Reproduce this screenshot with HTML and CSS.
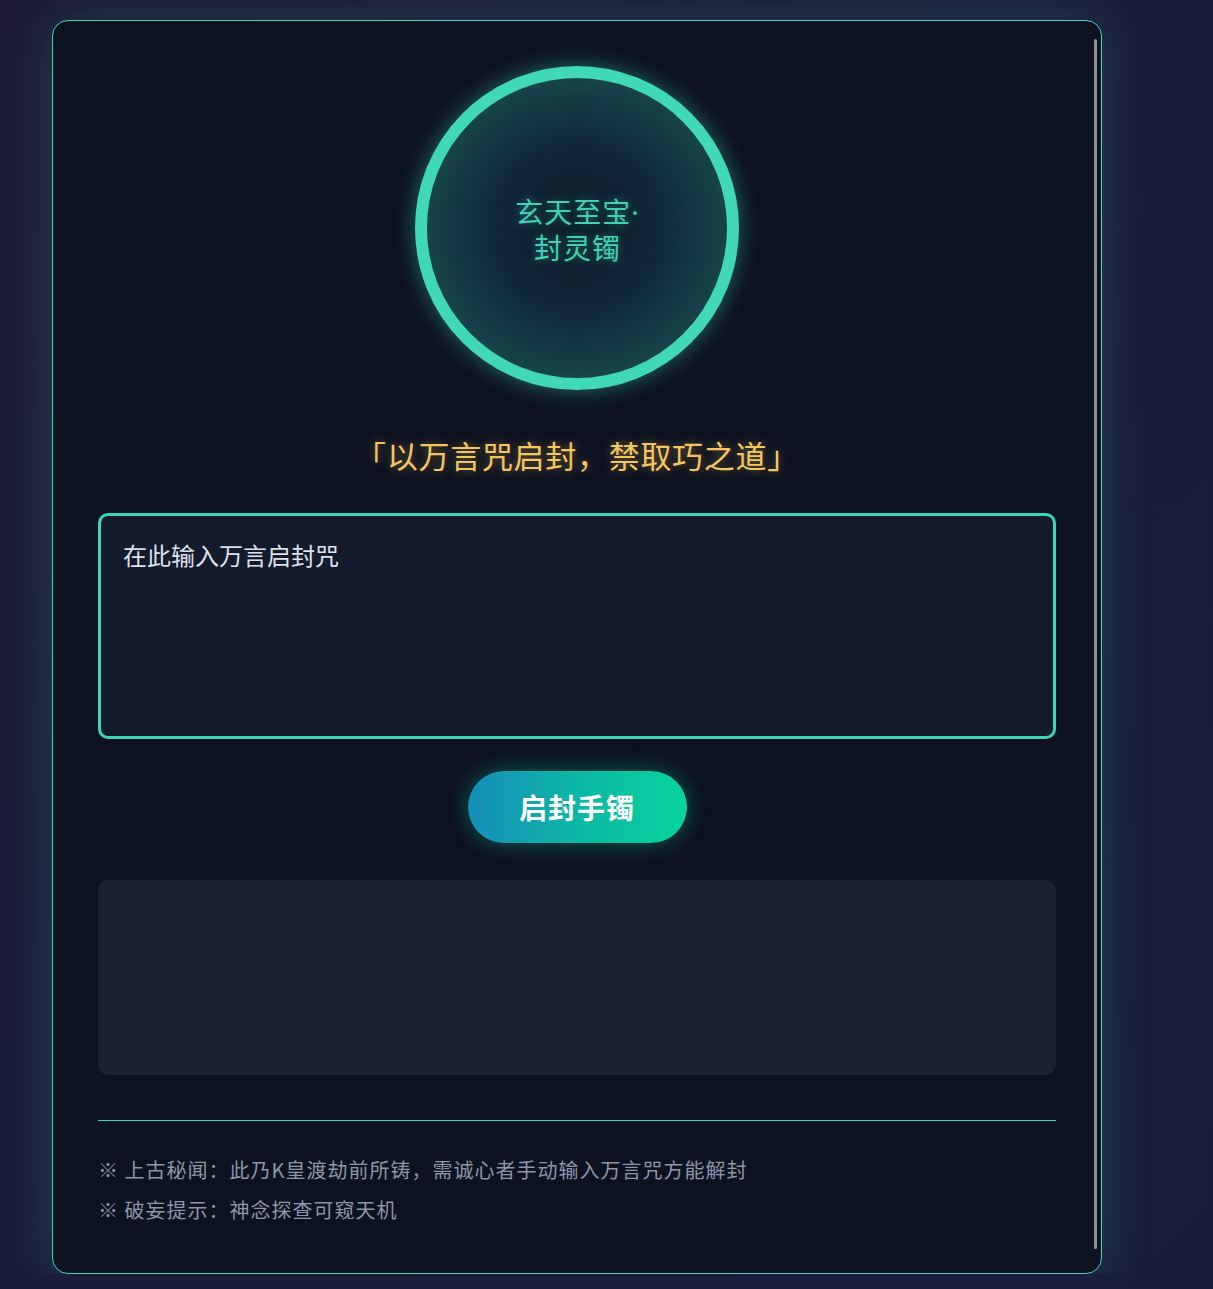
FILE: index.html
```html
<!DOCTYPE html>
<html lang="zh-CN">
<head>
<meta charset="utf-8">
<title>玄天至宝·封灵镯</title>
<link rel="stylesheet" href="styles.css">
</head>
<body>
<main class="panel">
  <div class="orb"><span class="orb-text">玄天至宝·<br>封灵镯</span></div>
  <p class="motto">「以万言咒启封，禁取巧之道」</p>
  <textarea class="spell" placeholder="在此输入万言启封咒"></textarea>
  <button class="unseal" type="button">启封手镯</button>
  <div class="result"></div>
  <hr class="divider">
  <div class="notes">
    <p>※ 上古秘闻：此乃K皇渡劫前所铸，需诚心者手动输入万言咒方能解封</p>
    <p>※ 破妄提示：神念探查可窥天机</p>
  </div>
</main>
</body>
</html>
```
FILE: styles.css
```css
html {
  background: linear-gradient(135deg, #1d1c34 0%, #1a1e3a 60%, #181f3d 100%);
  min-height: 100%;
}
body {
  margin: 0;
  padding: 20px 0 0 52px;
  font-family: "Noto Sans CJK SC", "Noto Sans", sans-serif;
  letter-spacing: 1px;
}
.panel {
  position: relative;
  box-sizing: border-box;
  width: 1050px;
  height: 1254px;
  padding: 45px 45px 43px;
  background: #0d1220;
  border: 1px solid #3dd6b5;
  border-radius: 16px;
  box-shadow: 0 0 50px rgba(61, 214, 181, 0.18);
  display: flex;
  flex-direction: column;
  align-items: center;
}
.panel::after {
  content: "";
  position: absolute;
  top: 18px;
  bottom: 24px;
  right: 4px;
  width: 3px;
  border-radius: 2px;
  background: #8f8f8f;
}
.orb {
  box-sizing: border-box;
  width: 324px;
  height: 324px;
  border-radius: 50%;
  border: 12px solid #41d8b5;
  background: radial-gradient(circle at center, #0e1c2a 0%, #10283a 40%, #17434a 70%, #226660 100%);
  box-shadow: 0 0 22px rgba(61, 214, 181, 0.45);
  display: flex;
  align-items: center;
  justify-content: center;
}
.orb-text {
  margin-top: 4px;
  padding-left: 1px;
  color: #3fd1b0;
  font-family: "Noto Sans", "Noto Sans CJK SC", sans-serif;
  font-size: 28px;
  letter-spacing: 1px;
  line-height: 36px;
  text-align: center;
  text-shadow: 0 0 8px rgba(61, 214, 181, 0.4);
}
.motto {
  margin: 42px 0 0;
  color: #f6c65e;
  font-size: 31px;
  letter-spacing: 0.7px;
  line-height: 45px;
  text-shadow: 0 0 10px rgba(246, 198, 94, 0.45);
}
.spell {
  box-sizing: border-box;
  margin-top: 36px;
  width: 100%;
  height: 226px;
  padding: 21px 22px;
  border: 3px solid #3dd6b5;
  border-radius: 10px;
  background: #141b2d;
  color: #e1e6f0;
  font-family: inherit;
  font-size: 24px;
  line-height: 36px;
  resize: none;
  outline: none;
}
.spell::placeholder {
  color: #dde2ec;
  opacity: 1;
}
.unseal {
  margin-top: 32px;
  width: 219px;
  height: 72px;
  border: none;
  border-radius: 36px;
  background: linear-gradient(90deg, #178db8 0%, #0cb7a6 50%, #08d49a 100%);
  color: #ffffff;
  font-family: inherit;
  font-size: 28px;
  font-weight: 700;
  letter-spacing: 1px;
  box-shadow: 0 0 22px rgba(13, 211, 155, 0.4);
  cursor: pointer;
}
.result {
  margin-top: 37px;
  width: 100%;
  height: 195px;
  border-radius: 10px;
  background: #1a2135;
}
.divider {
  margin: 45px 0 0;
  width: 100%;
  height: 0;
  border: none;
  border-top: 1px solid #3dd6b5;
}
.notes {
  margin-top: 29px;
  width: 100%;
  color: #8d96a8;
  font-size: 20px;
  line-height: 40px;
}
.notes p {
  margin: 0;
}
```
